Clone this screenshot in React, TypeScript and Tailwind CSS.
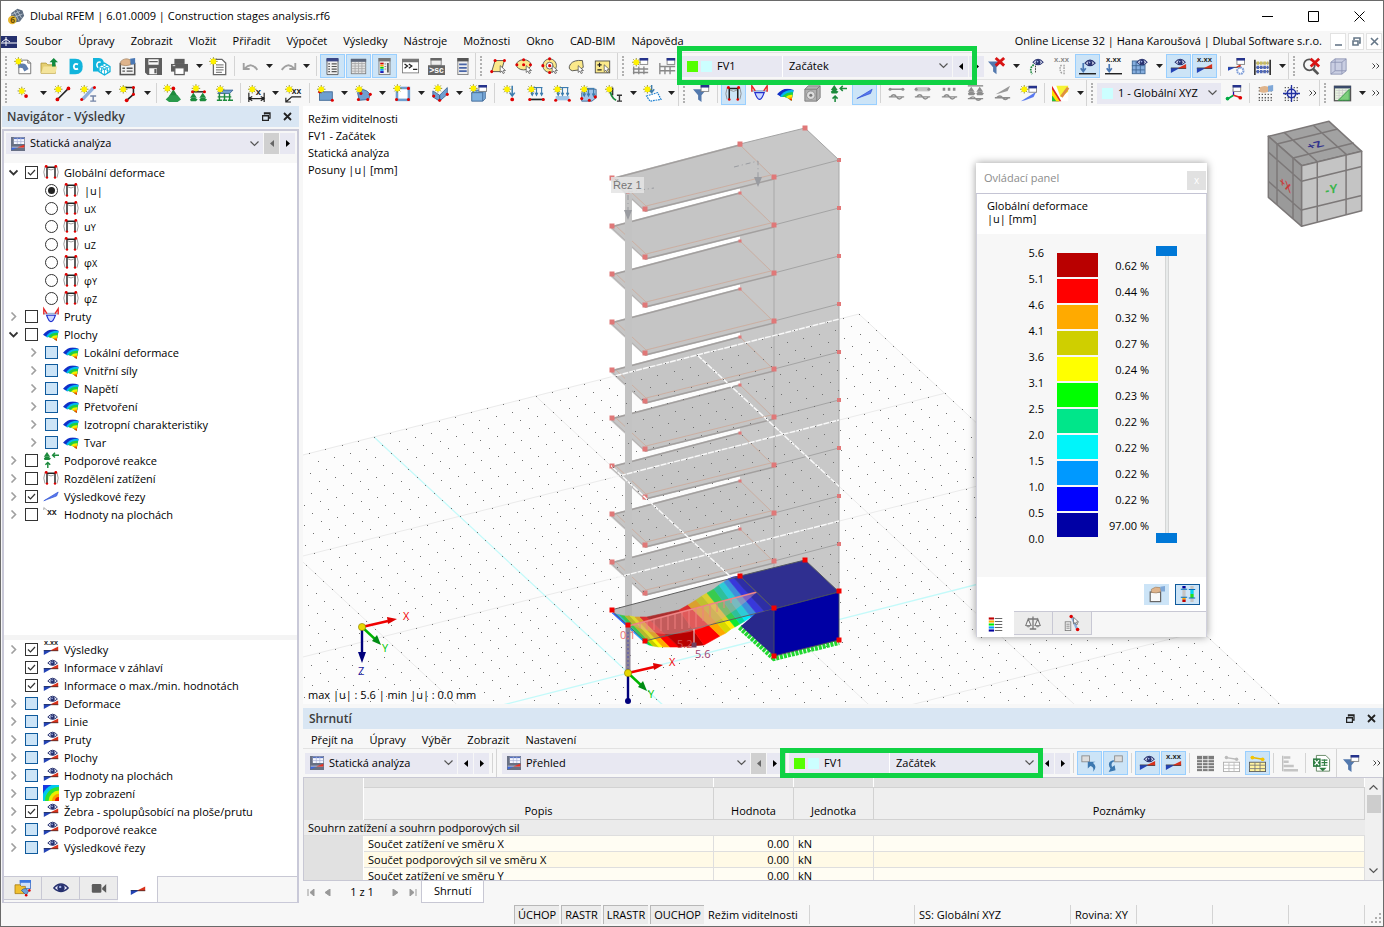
import React from "react";

type P = { x: number; y: number };

/* ---------- small drawing parts ---------- */
const Ico = ({ children, s = 20 }: { children: React.ReactNode; s?: number }) => (
  <svg width={s} height={s} viewBox="0 0 20 20" fill="none" aria-hidden="true" className="shrink-0 overflow-visible">
    {children}
  </svg>
);
const Star = ({ x = 5, y = 5 }: Partial<P>) => (
  <g transform={`translate(${x} ${y})`}>
    <path d="M0-5V5M-5 0H5M-3.5-3.5L3.5 3.5M3.5-3.5L-3.5 3.5" stroke="#8a8420" strokeWidth="1" />
    <circle r="3.3" fill="#fff200" />
  </g>
);
const Dot = ({ x, y, r = 1.8 }: P & { r?: number }) => <circle cx={x} cy={y} r={r} fill="#e00000" />;
const Win = ({ x = 10, y = 0 }: Partial<P>) => (
  <g transform={`translate(${x} ${y})`}>
    <rect x=".5" y=".5" width="9" height="7" fill="#fff" stroke="#7c7c7c" />
    <rect width="10" height="3" fill="#26338c" />
  </g>
);
const Eye = ({ x = 12, y = 5 }: Partial<P>) => (
  <g transform={`translate(${x} ${y})`}>
    <path d="M-6 0Q0-7 6 0Q0 6 -6 0Z" fill="#dfe3f4" stroke="#26306e" strokeWidth="1.2" />
    <circle r="2.8" fill="#26306e" />
    <circle cx="-.6" cy="-.8" r="1" fill="#9fb0e8" />
  </g>
);
const Wedge = () => (
  <>
    <path d="M1 12H19" stroke="#222" strokeWidth="1.4" />
    <path d="M1 12H11L1 17.5Z" fill="#2343b5" />
    <path d="M9 12L19 7V12Z" fill="#d8321c" />
  </>
);
const XXX = ({ y = 5, s = "x.xx", c = "#222" }: { y?: number; s?: string; c?: string }) => (
  <text x="10" y={y} textAnchor="middle" fontSize="9" fontWeight="700" fill={c} fontFamily="Liberation Sans, sans-serif">
    {s}
  </text>
);
const Curs = ({ x = 11, y = 10 }: Partial<P>) => (
  <path transform={`translate(${x} ${y})`} d="M0 0V8L2 6.3L3.4 9.3L5 8.5L3.6 5.7H6.2Z" fill="#fff" stroke="#444" strokeWidth=".8" />
);
const Loads = ({ y = 4 }: { y?: number }) => (
  <g stroke="#3c7cae" strokeWidth="1.3">
    <path d={`M4 ${y}H17`} />
    <path d={`M5 ${y}V${y + 9}M10 ${y}V${y + 9}M16 ${y}V${y + 9}`} />
    <path d={`M3.5 ${y + 6}l1.5 3l1.5-3M8.5 ${y + 6}l1.5 3l1.5-3M14.5 ${y + 6}l1.5 3l1.5-3`} />
  </g>
);
const Frame = ({ c = "#222" }: { c?: string }) => (
  <>
    <path d="M5 17V4H15V17" stroke={c} strokeWidth="1.8" />
    <path d="M2.500 3.500Q-.5 10 2.500 17M17.500 3.500Q20.500 10 17.500 17M6 6Q10 9 14 6" stroke="#888" strokeWidth="1" />
    <Dot x={4} y={3} /><Dot x={16} y={3} /><Dot x={5} y={17} r={1.5} /><Dot x={15} y={17} r={1.5} />
  </>
);
const Fan = () => (
  <>
    <clipPath id="fanShape"><path d="M0 11Q8 1 19.500 6L17 18.500Q11 13 5 14Z" /></clipPath>
    <g clipPath="url(#fanShape)">
      <rect width="20" height="20" fill="#1030c8" />
      <circle cx="17" cy="22" r="16" fill="#00b8f0" />
      <circle cx="17" cy="22" r="13.500" fill="#20d040" />
      <circle cx="17" cy="22" r="10.500" fill="#f4f000" />
      <circle cx="17" cy="22" r="7.500" fill="#ff8c00" />
      <circle cx="17" cy="22" r="5.500" fill="#e01000" />
    </g>
  </>
);
const Member = () => (
  <>
    <path d="M1 7H19" stroke="#9fb6d6" strokeWidth="2" />
    <path d="M1 8V1L5 7M15 7L19 1V8" stroke="#e82828" strokeWidth="1.700" />
    <path d="M4.500 9Q10 25 15.500 9Z" fill="#ccd8ff" stroke="#2030d0" strokeWidth="1.400" />
  </>
);
const Support = ({ x = 0, y = 0, c = "#1c8a3c" }: Partial<P> & { c?: string }) => (
  <g transform={`translate(${x} ${y})`}>
    <path d="M4 0L8 6H0Z" fill={c} />
    <path d="M0 8L2 6H6L9 8L7 10H1Z" fill={c} />
  </g>
);
const Funnel = ({ x = 0, y = 5 }: Partial<P>) => (
  <path transform={`translate(${x} ${y})`} d="M0 0H16L10 7V15L6 12V7Z" fill="#5379ae" />
);
const Dlg = ({ c = "#7c7c7c" }: { c?: string }) => (
  <>
    <rect x="1.500" y="1.500" width="17" height="17" fill="#e4e4e4" stroke={c} />
    <rect x="1" y="1" width="18" height="3.500" fill="#5a6478" />
  </>
);
const Grid = ({ c = "#999" }: { c?: string }) => (
  <path d="M2 6.500H18M2 9.500H18M2 12.500H18M2 15.500H18M6 5V18M10 5V18M14 5V18" stroke={c} />
);
const MiniGrid = () => <path d="M2 3H19M2 7H19M2 11H19M2 15H19M2 18H19" stroke="#555" strokeWidth="1.500" strokeDasharray="1.500 2" />;

/* ---------- icons ---------- */
const I: Record<string, React.ReactNode> = {
  newModel: <><path d="M4.500 2.500H15L18.500 6V18.500H4.500Z" fill="#fff" stroke="#666" /><path d="M15 2.500V6H18.500" stroke="#666" /><path d="M4 8Q9 5 13 8L16 13L11 16L9 12Q6 11 4 12Z" fill="#5f7fae" /><Star x={4} y={4} /></>,
  open: <><path d="M0 6H6L8 8H17V18H0Z" fill="#e5cf72" stroke="#b39b3e" /><path d="M0 18L3 10H19L17 18Z" fill="#f4e49b" /><path d="M15 0L20 5H17V10H13V5H10Z" fill="#128a3e" /></>,
  dC: <><path d="M3 1H10Q18.500 1 18.500 10T10 19H3Z" fill="#12b4dc" /><path d="M13 7.500Q8.500 5.500 8 10Q8.500 14.500 13 12.500" stroke="#fff" strokeWidth="2.200" /></>,
  dBox: <><path d="M0 0H7Q13 0 13 8V16H0Z" fill="#12b4dc" /><path d="M9 5Q5 4 4.500 8Q5 12 8 11" stroke="#fff" strokeWidth="1.800" /><path d="M7 10L13.500 6L20 10V16L13.500 20L7 16Z" fill="#fff" stroke="#12b4dc" strokeWidth="1.500" /><path d="M7 10L13.500 13L20 10M10 8L17 12V18M17 8L10 12V18M13.500 13V20M7 16L13.500 13L20 16" stroke="#12b4dc" /></>,
  hand: <><rect x="1.500" y="6.500" width="17" height="13" fill="#f2f2f2" stroke="#555" strokeWidth="1.800" /><path d="M4 12H7M9 12H16M4 15.500H7M9 15.500H16" stroke="#555" strokeWidth="1.600" /><path d="M2 4Q7 -1 13 2L14 8Q8 10 2 8Z" fill="#dfb48c" stroke="#8a6a4a" strokeWidth=".6" /><path d="M13 1L19 0V7L14 8Z" fill="#4a78b4" /></>,
  save: <path fillRule="evenodd" d="M0 0H20V20H3L0 17ZM4 1.500V8H16V1.500ZM5 3.500H15V5H5ZM5 12V19H14V12ZM11 13H13.500V18H11Z" fill="#5e5e5e" />,
  print: <><rect x="4" y="1" width="12" height="6" fill="#5e5e5e" /><path d="M0 7H20V16H0Z" fill="#5e5e5e" /><rect x="4.500" y="11.500" width="11" height="8" fill="#fff" stroke="#5e5e5e" strokeWidth="1.500" /><path d="M2 9H5" stroke="#fff" /></>,
  report: <><path d="M4 1.500H14L18.500 6V19.500H4Z" fill="#fff" stroke="#666" strokeWidth="1.500" /><path d="M7 8H16M7 11H16M7 14H16M7 17H14" stroke="#888" strokeWidth="1.400" /><Star x={4} y={4} /></>,
  undo: <path d="M2 6V13H9M3 12.500Q11 4 18 14" stroke="#a0a0a0" strokeWidth="2.200" />,
  redo: <path d="M18 6V13H11M17 12.500Q9 4 2 14" stroke="#a0a0a0" strokeWidth="2.200" />,
  panelL: <><path d="M3.500 1H16.500V19.500H3.500Z" fill="#f0f0f0" stroke="#555" /><rect x="3" y="0" width="14" height="4" fill="#3a4686" /><path d="M5 7H7M9 7H15M5 10H7M9 10H15M5 13H7M9 13H15M5 16H7M9 16H15" stroke="#555" strokeWidth="1.400" /></>,
  panelT: <><Dlg /><Grid c="#aaa" /></>,
  panelC: <><rect x="3.500" y=".5" width="13" height="19" fill="#f0f0f0" stroke="#777" /><rect x="3" y="0" width="14" height="4" fill="#777" /><path d="M5 6.500H9" stroke="#c00" strokeWidth="2" /><path d="M5 9H9" stroke="#fa0" strokeWidth="2" /><path d="M5 11.500H9" stroke="#0c0" strokeWidth="2" /><path d="M5 14H9" stroke="#09f" strokeWidth="2" /><path d="M5 16.500H9" stroke="#00a" strokeWidth="2" /><path d="M10 7H12M10 10H12M10 13H12" stroke="#777" /><path d="M14 6V17" stroke="#555" strokeWidth="2" /></>,
  console: <><rect x=".5" y="1.500" width="19" height="16" fill="#fff" stroke="#777" /><rect y="1" width="20" height="4" fill="#777" /><path d="M3 7L6.500 9.500L3 12M8 7L11.500 9.500L8 12M13 13.500H18" stroke="#222" strokeWidth="1.500" /></>,
  script: <><rect x="3.500" y=".5" width="12" height="8" fill="#eee" stroke="#777" /><rect x="3" y="0" width="13" height="3" fill="#666" /><rect x="0" y="8.500" width="20" height="11.500" fill="#666" /><text x="10" y="17.500" textAnchor="middle" fontSize="10" fontWeight="700" fill="#fff" fontFamily="Liberation Sans, sans-serif">&gt;sc</text></>,
  doc: <><rect x="4.500" y=".5" width="12" height="19" fill="#eee" stroke="#777" /><rect x="4" y="0" width="13" height="4" fill="#555" /><path d="M6 7.500H15M6 11.500H15M6 15.500H15" stroke="#4a66a8" strokeWidth="2" /></>,
  selRect: <><path d="M6 3H17L13 16H2Z" fill="#fbe98a" stroke="#444" /><Dot x={6} y={3} /><Dot x={17} y={3} /><Dot x={2} y={16} /><Curs x={12} y={9} /></>,
  selEll: <><ellipse cx="9" cy="8" rx="8.500" ry="6" fill="#fbe98a" stroke="#444" /><Dot x={9} y={2} /><Dot x={1} y={8} /><Dot x={17} y={8} /><Dot x={9} y={8} /><Curs x={12} y={9} /></>,
  selRing: <><circle cx="9" cy="9" r="8" fill="#fbe98a" stroke="#555" /><circle cx="9" cy="9" r="4" fill="#fff" stroke="#555" /><Dot x={9} y={1} /><Dot x={9} y={17} /><Dot x={1} y={9} /><Dot x={9} y={9} /><Curs x={12} y={9} /></>,
  selLasso: <><path d="M3 7Q7 2 17 3L18 11L13 14L5 15Q-1 13 3 7Z" fill="#fbe98a" stroke="#444" /><Curs x={12} y={9} /></>,
  selPM: <><rect x="1.500" y="3.500" width="17" height="14" fill="#fbe98a" stroke="#444" /><path d="M4 8H9M6.500 5.500V10.500M4 14H9" stroke="#222" strokeWidth="1.400" /><Curs x={12} y={8} /></>,
  tblStar: <><path d="M2 10V19M8 10V19M14 10V19M1 13H19M1 17H19" stroke="#888" strokeWidth="1.600" /><Win x={9} y={0} /><Star /></>,
  tbl: <><path d="M1 6V19M7 10V19M13 10V19M1 10H19M1 15H19" stroke="#888" strokeWidth="1.600" /><Win x={9} y={0} /></>,
  filtX: <><Funnel y={4} /><path d="M9 0L19 9M19 0L9 9" stroke="#d81414" strokeWidth="3.400" /></>,
  eyeBeam: <><path d="M8 8Q2 12 6 19" stroke="#1c8a3c" strokeWidth="2" strokeDasharray="2 1" /><path d="M10 9V18" stroke="#222" strokeDasharray="2 1" /><Eye x={13} y={5} /></>,
  xxBeam: <><XXX c="#888" s="x.xx" /><path d="M10 8Q6 13 11 19M13 8V19" stroke="#999" strokeWidth="1.500" strokeDasharray="2 1" /></>,
  eyeLoad: <><path d="M0 18.500H20" stroke="#222" strokeWidth="1.700" /><path d="M5 6V16M2 12L5 16L8 12" stroke="#4a78b4" strokeWidth="2" /><Eye x={13} y={6} /></>,
  xxLoad: <><XXX /><path d="M0 18.500H20" stroke="#222" strokeWidth="1.700" /><path d="M5 7V16M2 12L5 16L8 12" stroke="#4a78b4" strokeWidth="2" /></>,
  gridEye: <><rect x="1.500" y="3.500" width="15" height="15" fill="#86aede" stroke="#3c6492" /><path d="M6 4V18M11 4V18M1 9H16M1 14H16" stroke="#3c6492" /><Eye x={13} y={5} /></>,
  resEye: <><Wedge /><Eye x={12} y={5} /></>,
  resXX: <><Wedge /><XXX /></>,
  resGear: <><path d="M0 11H16" stroke="#222" /><path d="M0 11H9L0 15Z" fill="#2343b5" /><path d="M9 11L15 7V11Z" fill="#d8321c" /><Win x={10} y={0} /><circle cx="14.500" cy="15" r="3.700" stroke="#7f9ed8" strokeWidth="2.400" fill="#fff" strokeDasharray="2 .8" /></>,
  abacus: <><path d="M1 2V20M19 2V20" stroke="#222" strokeWidth="1.800" /><path d="M2 6H18M2 11H18M2 16H18" stroke="#555" /><path d="M3 6H17" stroke="#c8bc60" strokeWidth="4" strokeDasharray="3 1" /><path d="M3 11H17M3 16H17" stroke="#5068b8" strokeWidth="4" strokeDasharray="3 1" /></>,
  magX: <><circle cx="7.500" cy="8" r="6.500" stroke="#555" strokeWidth="2" /><path d="M12 13L18 19" stroke="#555" strokeWidth="3.200" /><path d="M9 1L19 10M19 1L9 10" stroke="#d81414" strokeWidth="3.200" /></>,
  box: <><path d="M1 5L6 1H19V15L14 19H1Z" fill="#c9cee2" stroke="#8d93b4" /><path d="M1 5H14V19M14 5L19 1M6 1V15H19M6 15L1 19" stroke="#8d93b4" /></>,
  node: <><Star x={8} y={7} /><Dot x={13} y={13} r={2.2} /></>,
  line: <><path d="M4 17L17 4" stroke="#222" strokeWidth="1.800" /><Dot x={4} y={17} r={2.2} /><Dot x={17} y={4} r={2.2} /><Star /></>,
  member: <><path d="M3 17L16 3" stroke="#8fb0dc" strokeWidth="4" /><path d="M12 13H19M15.500 13V19M12 19H19" stroke="#7485a8" strokeWidth="1.700" /><Dot x={17} y={3} /><Dot x={2} y={17} /><Star /></>,
  poly: <><path d="M4 3H17V11L9 18" stroke="#222" strokeWidth="1.800" /><Dot x={17} y={3} /><Dot x={17} y={11} /><Dot x={9} y={18} r={2.2} /><Star /></>,
  sup1: <><path d="M11 5L16 13H6Z" fill="#1c8a3c" /><path d="M2 17L7 12H16L20 17L16 20H6Z" fill="#2a9a4c" /><Dot x={11} y={4} r={2.2} /><Star x={4} y={4} /></>,
  sup2: <><path d="M3 8H18" stroke="#222" strokeWidth="1.700" /><Support x={0} y={9} /><Support x={11} y={9} /><Dot x={3} y={8} /><Dot x={17} y={8} /><Star x={7} y={4} /></>,
  sup3: <><path d="M2 10L6 6H20L16 10Z" fill="#6f9fd0" stroke="#3c6492" /><path d="M4 10V17M10 10V17M16 10V17M1 18H7M8 18H13M14 18H20M2 14H18" stroke="#1c8a3c" strokeWidth="1.700" /><Star /></>,
  dimX: <><path d="M1 9V20M19 9V20M1 16H19M5 13.500L1 16L5 18.500M15 13.500L19 16L15 18.500" stroke="#222" strokeWidth="1.400" /><text x="9" y="12" fontSize="11" fontWeight="700" fill="#222" fontFamily="Liberation Sans, sans-serif">x</text><Star /></>,
  dimXX: <><path d="M19 14H8L1 20M1 15V20H7" stroke="#222" strokeWidth="1.400" /><text x="8" y="11" fontSize="10" fontWeight="700" fill="#222" fontFamily="Liberation Sans, sans-serif">xx</text><Star /></>,
  surf: <><rect x="3" y="8" width="15" height="10" fill="#6f9fd0" stroke="#3c6492" /><Dot x={3} y={8} /><Dot x={18} y={18} /><Star /></>,
  surf2: <><path d="M3 9Q10 1 18 11L16 17L5 18Z" fill="#6f9fd0" stroke="#3c6492" /><Dot x={7} y={10} /><Dot x={18} y={11} /><Dot x={4} y={17} /><Dot x={15} y={17} /><Star /></>,
  opening: <><rect x="3.500" y="3.500" width="14" height="14" fill="#fff" stroke="#6f9fd0" strokeWidth="3" /><Dot x={5} y={5} /><Dot x={17} y={4} /><Dot x={3} y={17} /><Dot x={17} y={17} /><Star x={4} y={4} /></>,
  solid: <><path d="M1 7L9 12V19L1 14Z M9 12L18 3V11L9 19Z" fill="#6f9fd0" stroke="#3c6492" /><Dot x={9} y={18} /><Dot x={18} y={11} /><Dot x={2} y={13} /><Star x={7} y={4} /></>,
  solidWin: <><path d="M2 9L5 6H18V16L15 19H2Z" fill="#7fb0de" stroke="#3c6492" /><path d="M2 9H15V19M15 9L18 6" stroke="#3c6492" /><Win x={10} y={0} /><Star x={4} y={4} /></>,
  load1: <><path d="M12 1V13M9 9L12 13L15 9" stroke="#3c7cae" strokeWidth="1.800" /><Dot x={12} y={17} r={2.2} /><Star x={6} y={5} /></>,
  load2: <><Loads y={3} /><path d="M2 17H19" stroke="#222" strokeWidth="2" /><Dot x={2} y={17} /><Dot x={18} y={17} /><Star x={4} /></>,
  load3: <><rect x="2" y="13" width="16" height="5" fill="#9fc4e8" /><Loads y={3} /><Dot x={2} y={18} /><Dot x={18} y={18} /><Star x={4} /></>,
  load4: <><path d="M2 9L6 5H19V15L14 19H2Z" fill="#9fc4e8" stroke="#3c6492" /><Loads /><Dot x={2} y={16} /><Dot x={11} y={18} /><Dot x={18} y={14} /><Star /></>,
  loadI: <><path d="M6 4Q6 14 13 18" stroke="#1c8a3c" strokeWidth="2" /><path d="M9 3V12M14 12H20M17 12V19M14 19H20" stroke="#333" strokeWidth="1.600" /><Star /></>,
  loadS: <><path d="M9 0V8M6 5L9 9L12 5" stroke="#3c7cae" strokeWidth="1.700" /><path d="M3 13L16 9L20 17L7 19Z" fill="#fff" stroke="#1c7fd0" strokeDasharray="2 1" strokeWidth="1.400" /><Star x={4} y={5} /></>,
  filtWin: <><Funnel y={5} /><Win x={9} y={0} /></>,
  frame: <Frame />,
  member2: <Member />,
  fan: <Fan />,
  cube: <><path d="M1 5L5 1H19V15L15 19H1Z" fill="#b0b0b0" stroke="#777" /><path d="M1 5H15V19M15 5L19 1" stroke="#777" /><circle cx="8" cy="12" r="5" fill="#ddd" stroke="#888" /><circle cx="8" cy="12" r="1.800" fill="#777" /></>,
  reac: <><Support x={1} y={0} /><path d="M12 4H20M15 1L12 4L15 7M6 20V13M3 16L6 13L9 16" stroke="#1c8a3c" strokeWidth="1.800" /></>,
  slice: <path d="M1 16L19 5L17 10L6 14Z" fill="#5878f0" stroke="#2c50d0" strokeWidth=".8" />,
  d1: <><path d="M2 5H18M1 14H19M3 14Q7 9 10 14T17 14" stroke="#8c8c8c" strokeWidth="1.600" /><circle cx="2.500" cy="5" r="1.800" fill="#8c8c8c" /><circle cx="17.500" cy="5" r="1.800" fill="#8c8c8c" /></>,
  d2: <><path d="M2 5H18" stroke="#c6c6c6" strokeWidth="5" /><path d="M1 14H19M3 14Q7 9 10 14T17 14" stroke="#8c8c8c" strokeWidth="1.600" /><circle cx="2.500" cy="5" r="1.800" fill="#8c8c8c" /><circle cx="17.500" cy="5" r="1.800" fill="#8c8c8c" /></>,
  d3: <><path d="M2 5H18" stroke="#8c8c8c" strokeWidth="3.500" strokeDasharray="3 3" /><path d="M1 14H19M3 14Q7 9 10 14T17 14" stroke="#8c8c8c" strokeWidth="1.600" /></>,
  d4: <><path d="M1 1H19" stroke="#8c8c8c" strokeWidth="1.600" /><Support x={1} y={2} c="#8c8c8c" /><Support x={11} y={2} c="#8c8c8c" /><path d="M1 16H19M3 16Q7 12 10 16T17 16" stroke="#8c8c8c" strokeWidth="1.600" /></>,
  d5: <><path d="M2 11L19 1L16 7L6 10Z" fill="#999" /><path d="M1 15H19M3 15Q7 11 10 15T17 15" stroke="#8c8c8c" strokeWidth="1.600" /></>,
  sliceStar: <><path d="M1 19L19 8L16 14L6 18Z" fill="#5878f0" /><Win x={10} y={1} /><Star /></>,
  paint: <><path d="M0 1H19V19H0Z" fill="#fff" /><path d="M0 1L11 19H0Z" fill="#e02020" /><path d="M0 7L8 19H0Z" fill="#20c040" /><path d="M0 5L9 19H5L0 12Z" fill="#ffe000" /><path d="M5 1H19V8L10 14Z" fill="#f4f000" opacity=".8" /><path d="M19 3L11 14" stroke="#e09040" strokeWidth="3.400" /></>,
  axes: <><path d="M10 12V5" stroke="#20a" strokeWidth="1.500" /><path d="M10 12L2 17" stroke="#0a4" strokeWidth="2" /><path d="M10 12L19 15" stroke="#e02020" strokeWidth="2" /><Dot x={18} y={15} r={2.200} /><circle cx="3" cy="16" r="2.200" fill="#0a4" /><Win x={9} y={0} /></>,
  handGrid: <><MiniGrid /><path d="M3 3Q8 0 13 2L13 8Q8 10 3 8Z" fill="#dfb48c" /><path d="M13 1L19 0V7L13 8Z" fill="#7fa8d8" /></>,
  target: <><MiniGrid /><circle cx="10" cy="10" r="5" stroke="#2030a0" strokeWidth="1.800" fill="#eef" /><path d="M10 0V20M0 10H20" stroke="#2030a0" strokeWidth="1.500" /></>,
  tblGreen: <><rect x=".5" y="1.500" width="19" height="17" fill="#e8f4e0" stroke="#555" strokeWidth="1.500" /><Grid c="#ccc" /><rect y="1" width="20" height="3" fill="#3a4a6a" /><path d="M18 5V18H5Z" fill="#7ccf7c" stroke="#2c8a3c" /></>,
  analysis: <><rect width="20" height="20" fill="#687084" /><rect x="4" y="1" width="15" height="9" fill="#f4f6ff" /><path d="M4 2H19" stroke="#5470c0" strokeWidth="2" /><path d="M4 6.500H19M9 1V10M14 1V10" stroke="#aab4d8" /><path d="M1 15H10L1 19Z" fill="#3c68e0" /><path d="M1 14.500H19" stroke="#dde" /><path d="M9 15L19 11V15Z" fill="#f03020" /></>,
  xxS: <><text x="11" y="11" textAnchor="middle" fontSize="11" fontWeight="700" fill="#222" fontFamily="Liberation Sans, sans-serif">xx</text><path d="M1 2L6 6M1 2V5" stroke="#999" /></>,
  iso: <><clipPath id="isoBox"><rect width="20" height="20" /></clipPath><g clipPath="url(#isoBox)"><rect width="20" height="20" fill="#1838e0" /><circle cx="20" cy="20" r="22" fill="#00c8f0" /><circle cx="20" cy="20" r="17.500" fill="#30e030" /><circle cx="20" cy="20" r="13" fill="#e8f000" /><circle cx="20" cy="20" r="9" fill="#ff9c00" /><circle cx="20" cy="20" r="5" fill="#e81800" /></g></>,
  navData: <><rect x="6.500" y=".5" width="13" height="10" fill="#cfe0f8" stroke="#3c6cc0" /><rect x="6" y="0" width="14" height="3.500" fill="#3c78e0" /><path d="M0 6H6L8 8H13V17H0Z" fill="#f0c030" stroke="#a87c10" /><path d="M8 13Q13 8 17 14L14 19Z" fill="#6fa0d8" stroke="#3c6492" /><Dot x={18} y={13} r={1.600} /><Dot x={14} y={19} r={1.600} /></>,
  navEye: <><path d="M1 10Q10 0 19 10Q10 19 1 10Z" fill="#eef" stroke="#26306e" strokeWidth="1.600" /><circle cx="10" cy="10" r="4.600" fill="#26306e" /><circle cx="9" cy="8.600" r="1.500" fill="#9fb0e8" /></>,
  cam: <><rect x="1" y="5" width="12" height="11" rx="1.500" fill="#5c5c5c" /><path d="M14 10L19 5V16L14 12Z" fill="#5c5c5c" /></>,
  wedge: <Wedge />,
  syncA: <><rect x="1" y="1" width="9" height="7" fill="#ddd" stroke="#888" /><path d="M8 8H17M8 8V16L11 13Q16 14 14 20Q20 14 14 9L17 8Z" fill="#3c78b0" /></>,
  syncB: <><rect x="9" y="1" width="9" height="7" fill="#ddd" stroke="#888" /><path d="M8 6Q-1 8 4 16L2 20L10 18L9 12L6 14Q4 9 8 8Z" fill="#3c78b0" /></>,
  tGrid: <><rect x="0" y="1" width="20" height="18" fill="#7c7c7c" /><path d="M0 5.500H20M0 9H20M0 12.500H20M0 16H20M6.500 1V19M13 1V19" stroke="#f4f4f4" /></>,
  tNode: <><path d="M4 3L16 5" stroke="#bbb" strokeWidth="1.500" /><circle cx="4" cy="3" r="2" fill="#bbb" /><circle cx="16" cy="5" r="2" fill="#bbb" /><rect x=".5" y="8.500" width="19" height="11" fill="#fff" stroke="#aaa" /><path d="M0 12H20M0 16H20M7 9V19M13 9V19" stroke="#bbb" /></>,
  tNodeY: <><path d="M4 3L16 5" stroke="#e8b800" strokeWidth="1.700" /><circle cx="4" cy="3" r="2.200" fill="#f4c400" /><circle cx="16" cy="5" r="2.200" fill="#f4c400" /><rect x=".5" y="8.500" width="19" height="11" fill="#fff3a0" stroke="#555" /><path d="M0 12H20M0 16H20M7 9V19M13 9V19" stroke="#777" /></>,
  bars: <><path d="M2 1V19" stroke="#bbb" strokeWidth="1.500" /><path d="M3 3H11M3 8H9M3 13H15M3 18H20" stroke="#c4c4c4" strokeWidth="3" /></>,
  excel: <><path d="M4 .5H15L19.500 5V19H4Z" fill="#fff" stroke="#557a55" /><rect x="0" y="4" width="9" height="10" fill="#2f7d43" /><path d="M2 6L7 12M7 6L2 12" stroke="#fff" strokeWidth="1.500" /><path d="M10 6H17M10 9H17M10 12H17M13.500 5V13" stroke="#2f7d43" strokeWidth="1.300" /><path d="M7 15H16L11.500 19Z" fill="#2f7d43" /></>,
  legend: <><path d="M1 2H8" stroke="#c00000" strokeWidth="2.800" /><path d="M1 6H8" stroke="#fa0" strokeWidth="2.800" /><path d="M1 10H8" stroke="#0e0" strokeWidth="2.800" /><path d="M1 14H8" stroke="#09f" strokeWidth="2.800" /><path d="M1 18H8" stroke="#0000a0" strokeWidth="2.800" /><path d="M9 2H19M9 6H19M9 10H19M9 14H19M9 18H19" stroke="#555" strokeWidth="1.200" /></>,
  scales: <><path d="M10 2V17M6 17.500H14M4 5H16" stroke="#777" strokeWidth="1.600" /><path d="M4 5L1 13H7.500ZM16 5L12.500 13H19Z" fill="#f4f4f4" stroke="#777" strokeWidth="1.300" /><path d="M1 13Q4 18 7.500 13ZM12.500 13Q16 18 19 13Z" fill="#999" /></>,
  filtMem: <><rect x="1.500" y="8.500" width="7" height="11" fill="#eee" stroke="#777" /><path d="M3 11.500H7M3 14H7M3 16.500H7" stroke="#777" /><path d="M10 3L16 17" stroke="#8fb0dc" strokeWidth="3" /><Dot x={9} y={2} r={2.200} /><Dot x={17} y={18} r={2.200} /><Curs x={12} y={3} /></>,
  handBox: <><rect x="1.500" y="7.500" width="13" height="12" fill="#f8f8f8" stroke="#666" strokeWidth="1.500" /><path d="M3 4Q8 0 14 2L15 7Q9 10 3 8Z" fill="#dfb48c" stroke="#8a6a4a" strokeWidth=".6" /><path d="M14 1L20 0V7L15 7Z" fill="#7fa8d8" /></>,
  ranges: <><rect x="3" y="0" width="4" height="20" fill="#c4c4c4" /><rect x="3" y="0" width="4" height="3" fill="#0000a0" /><rect x="3" y="14" width="4" height="3" fill="#fa0" /><rect x="3" y="17" width="4" height="3" fill="#c00000" /><rect x="13" y="0" width="4" height="20" fill="#c4c4c4" /><rect x="13" y="5" width="4" height="5" fill="#00d8f0" /><rect x="13" y="10" width="4" height="5" fill="#20e020" /><path d="M1 4H9M1 14H9M11 4.500H19M11 15H19" stroke="#0070c0" strokeWidth="1.300" /></>,
};

/* ---------- controls ---------- */
const Tool = ({ n, on = false }: { n: string; on?: boolean }) => (
  <button
    type="button"
    aria-label={n}
    aria-pressed={on}
    className={`flex h-6 w-[25px] shrink-0 items-center justify-center ${on ? "border border-[#99cfff] bg-[#cce4f7]" : ""}`}
  >
    <Ico s={17}>{I[n]}</Ico>
  </button>
);
const Drop = () => (
  <button type="button" aria-label="Více" className="flex h-6 w-3 shrink-0 items-center justify-center">
    <svg width="7" height="4" viewBox="0 0 7 4"><path d="M0 0H7L3.500 4Z" fill="#222" /></svg>
  </button>
);
const Sep = () => <span className="mx-[3px] h-5 w-px shrink-0 bg-[#d4d4d4]" />;
const Grip = () => (
  <span className="mx-1 h-5 w-px shrink-0 border-l-2 border-dotted border-[#b0b0b0]" />
);
const More = ({ className = "" }: { className?: string }) => (
  <button type="button" aria-label="Další" className={`flex h-6 w-3 shrink-0 items-center justify-center ${className}`}>
    <svg width="8" height="6" viewBox="0 0 8 6" fill="none"><path d="M.5 .5L3 3L.5 5.500M4.500 .5L7 3L4.500 5.500" stroke="#444" /></svg>
  </button>
);
const Group = ({ t, w }: { t: string; w: string }) => (
  <div className={`flex shrink-0 items-center justify-between ${w}`}>
    {t.split(" ").map((n, i) =>
      n === "v" ? <Drop key={i} /> : <Tool key={i} n={n.replace("*", "")} on={n.endsWith("*")} />
    )}
  </div>
);
const Chevron = ({ className = "" }: { className?: string }) => (
  <svg width="9" height="6" viewBox="0 0 9 6" fill="none" className={`pointer-events-none shrink-0 ${className}`}>
    <path d="M.5 .5L4.500 4.500L8.500 .5" stroke="#555" strokeWidth="1.200" />
  </svg>
);
const Step = ({ dir, dim = false }: { dir: "l" | "r"; dim?: boolean }) => (
  <button
    type="button"
    aria-label={dir === "l" ? "Předchozí" : "Další"}
    className={`flex h-[21px] w-[15px] shrink-0 items-center justify-center ${dim ? "bg-[#d0d0d0]" : "bg-[#e8e8f2]"}`}
  >
    <svg width="4" height="7" viewBox="0 0 4 7">
      <path d={dir === "l" ? "M4 0V7L0 3.500Z" : "M0 0V7L4 3.500Z"} fill={dim ? "#666" : "#000"} />
    </svg>
  </button>
);
const Combo = ({ icon, text, label, w }: { icon?: string; text: string; label: string; w: string }) => (
  <div className={`flex h-[21px] shrink-0 items-center bg-[#e8e8f2] pl-[5px] pr-1 ${w}`}>
    {icon ? <Ico s={14}>{I[icon]}</Ico> : <span className="h-[11px] w-[11px] shrink-0 bg-[#ccffff]" />}
    <select aria-label={label} className="ml-[5px] min-w-0 flex-1 appearance-none bg-transparent outline-none">
      <option>{text}</option>
    </select>
    <Chevron />
  </div>
);
const StageCombo = ({ w, mark }: { w: string; mark: string }) => (
  <div className={`relative flex h-[21px] shrink-0 items-center bg-[#e8e8f2] pl-[5px] pr-1 ${w}`}>
    <span className="h-[11px] w-[11px] bg-[#55ff00]" />
    <span className="ml-[3px] h-[11px] w-[11px] bg-[#ccffff]" />
    <span className="ml-[5px] w-[65px]">FV1</span>
    <span className="h-full w-px bg-white" />
    <select aria-label="Fáze výstavby" className="ml-[6px] min-w-0 flex-1 appearance-none bg-transparent outline-none">
      <option>Začátek</option>
    </select>
    <Chevron />
    <span className={`pointer-events-none absolute z-10 border-[5px] border-[#10d244] ${mark}`} />
  </div>
);
const DockButtons = () => (
  <div className="ml-auto flex items-center gap-3 pr-[7px]">
    <button type="button" aria-label="Uvolnit panel">
      <svg width="9" height="9" viewBox="0 0 9 9" fill="none" stroke="#222"><path d="M2.500 2.500V1H8V6H6.500M2.500 1.500H8" strokeWidth="1.300" /><path d="M.6 3.500H6.400V8.400H.6ZM.6 4H6.400" strokeWidth="1.200" /></svg>
    </button>
    <button type="button" aria-label="Zavřít panel">
      <svg width="9" height="9" viewBox="0 0 9 9"><path d="M1 1L8 8M8 1L1 8" stroke="#222" strokeWidth="1.800" /></svg>
    </button>
  </div>
);

/* ---------- navigator ---------- */
type Row = { t: string; sub?: string; icon: string; arrow?: "open" | "closed"; kind: "on" | "off" | "blue" | "ron" | "roff"; d?: boolean };
const tree: Row[] = [
  { t: "Globální deformace", icon: "frame", arrow: "open", kind: "on" },
  { t: "|u|", icon: "frame", kind: "ron", d: true },
  { t: "u", sub: "X", icon: "frame", kind: "roff", d: true },
  { t: "u", sub: "Y", icon: "frame", kind: "roff", d: true },
  { t: "u", sub: "Z", icon: "frame", kind: "roff", d: true },
  { t: "φ", sub: "X", icon: "frame", kind: "roff", d: true },
  { t: "φ", sub: "Y", icon: "frame", kind: "roff", d: true },
  { t: "φ", sub: "Z", icon: "frame", kind: "roff", d: true },
  { t: "Pruty", icon: "member2", arrow: "closed", kind: "off" },
  { t: "Plochy", icon: "fan", arrow: "open", kind: "off" },
  { t: "Lokální deformace", icon: "fan", arrow: "closed", kind: "blue", d: true },
  { t: "Vnitřní síly", icon: "fan", arrow: "closed", kind: "blue", d: true },
  { t: "Napětí", icon: "fan", arrow: "closed", kind: "blue", d: true },
  { t: "Přetvoření", icon: "fan", arrow: "closed", kind: "blue", d: true },
  { t: "Izotropní charakteristiky", icon: "fan", arrow: "closed", kind: "blue", d: true },
  { t: "Tvar", icon: "fan", arrow: "closed", kind: "blue", d: true },
  { t: "Podporové reakce", icon: "reac", arrow: "closed", kind: "off" },
  { t: "Rozdělení zatížení", icon: "frame", arrow: "closed", kind: "off" },
  { t: "Výsledkové řezy", icon: "slice", arrow: "closed", kind: "on" },
  { t: "Hodnoty na plochách", icon: "xxS", arrow: "closed", kind: "off" },
];
const display: Row[] = [
  { t: "Výsledky", icon: "resXX", arrow: "closed", kind: "on" },
  { t: "Informace v záhlaví", icon: "resEye", kind: "on" },
  { t: "Informace o max./min. hodnotách", icon: "resEye", kind: "on" },
  { t: "Deformace", icon: "resEye", arrow: "closed", kind: "blue" },
  { t: "Linie", icon: "resEye", arrow: "closed", kind: "blue" },
  { t: "Pruty", icon: "resEye", arrow: "closed", kind: "blue" },
  { t: "Plochy", icon: "resEye", arrow: "closed", kind: "blue" },
  { t: "Hodnoty na plochách", icon: "resEye", arrow: "closed", kind: "blue" },
  { t: "Typ zobrazení", icon: "iso", arrow: "closed", kind: "blue" },
  { t: "Žebra - spolupůsobící na ploše/prutu", icon: "resEye", arrow: "closed", kind: "on" },
  { t: "Podporové reakce", icon: "resEye", arrow: "closed", kind: "blue" },
  { t: "Výsledkové řezy", icon: "resEye", arrow: "closed", kind: "blue" },
];
const TreeRow = ({ r }: { r: Row }) => {
  const radio = r.kind === "ron" || r.kind === "roff";
  return (
    <li className={`flex h-[18px] items-center ${r.d ? "pl-5" : ""}`}>
      <span className="flex w-[18px] justify-center">
        {r.arrow && (
          <button type="button" aria-label="Rozbalit">
            <svg width="9" height="9" viewBox="0 0 9 9" fill="none">
              {r.arrow === "open" ? <path d="M.5 2.500L4.500 6.500L8.500 2.500" stroke="#333" strokeWidth="1.800" /> : <path d="M2.500 .5L6.500 4.500L2.500 8.500" stroke="#a0a0a0" strokeWidth="1.600" />}
            </svg>
          </button>
        )}
      </span>
      <label className="flex items-center">
        <span className="relative ml-[3px] flex h-[13px] w-[13px]">
          {radio ? (
            <input type="radio" name="deformace" defaultChecked={r.kind === "ron"} className="peer h-[13px] w-[13px] appearance-none rounded-full border border-[#333] bg-white" />
          ) : (
            <input type="checkbox" defaultChecked={r.kind === "on"} className={`peer h-[13px] w-[13px] appearance-none border ${r.kind === "blue" ? "border-[#0f5a9c] bg-[#cce4f7]" : "border-[#333] bg-white"}`} />
          )}
          {radio ? (
            <span className="pointer-events-none absolute inset-[3px] hidden rounded-full bg-[#222] peer-checked:block" />
          ) : (
            <svg viewBox="0 0 13 13" fill="none" className="pointer-events-none absolute inset-0 hidden peer-checked:block"><path d="M3 6.500L5.500 9L10 4" stroke="#333" strokeWidth="1.200" /></svg>
          )}
        </span>
        <span className="ml-[5px] flex"><Ico s={16}>{I[r.icon]}</Ico></span>
        <span className="ml-[5px] whitespace-nowrap pt-[2px] leading-4">
          {r.t}
          {r.sub && <span className="text-[9px]">{r.sub}</span>}
        </span>
      </label>
    </li>
  );
};

/* ---------- scene ---------- */
const FLOORS = [0, 1, 2, 3, 4, 5, 6, 7, 8];
const SIDE = FLOORS.map((i) => i * 48);
const C0 = { x: 859, y: 315 };
const U = { x: 16.17, y: -4.1 };
const V = { x: 8.56, y: 7.93 };
const gridPoint = (i: number, j: number) => ({ x: C0.x - i * U.x + j * V.x, y: C0.y - i * U.y + j * V.y });
let dots = "";
for (let i = 0; i < 70; i++)
  for (let j = 0; j < 50; j++) {
    const p = gridPoint(i, j);
    if (p.x > 303 && p.y < 705) dots += `M${Math.round(p.x)} ${Math.round(p.y) + 0.5}h1`;
  }
let major = "";
for (let k = 0; k < 8; k++) {
  const a = gridPoint(0, k * 10), b = gridPoint(80, k * 10);
  const c = gridPoint(k * 10, 0), d = gridPoint(k * 10, 80);
  if (k !== 3) major += `M${a.x} ${a.y}L${b.x} ${b.y}M${c.x} ${c.y}L${d.x} ${d.y}`;
}
const bands: [number, number, number, number, string][] = [
  [612, 614, 643, 642, "#2460ff"], [616, 615, 645, 644, "#00c8f0"], [620, 616, 649, 646, "#10e030"],
  [625, 617, 653, 647, "#c8cc00"], [630, 617, 659, 648, "#ffff00"], [635, 618, 663, 648, "#ffa800"],
  [640, 618, 670, 648, "#ff0000"], [647, 618, 679, 648, "#b80000"], [679, 611, 704, 646, "#ff0000"],
  [688, 606, 720, 637, "#ffa800"], [696, 601, 726, 634, "#d8d800"], [702, 597, 731, 630, "#fff000"],
  [707, 594, 735, 628, "#10e830"], [714, 590, 740, 625, "#00d8a0"], [719, 586, 745, 622, "#00e8f8"],
  [724, 583, 751, 618, "#1890ff"], [728, 580, 757, 615, "#1010ff"], [733, 578, 765, 613, "#0000b0"],
  [740, 577, 774, 610, ""],
];
const Nd = ({ x, y, c = "#e07878", s = 5 }: P & { c?: string; s?: number }) => (
  <rect x={x - s / 2} y={y - s / 2} width={s} height={s} fill={c} />
);
const Triad = ({ x, y, z }: P & { z: number }) => (
  <g transform={`translate(${x} ${y})`}>
    <path d={`M0 0V${z}`} stroke="#00007c" strokeWidth="2.400" />
    <path d="M0 0L26-6" stroke="#f00000" strokeWidth="2.400" />
    <path d="M25-10L35-8L26-3Z" fill="#e00000" />
    <path d="M0 0L14 13" stroke="#00b400" strokeWidth="2.400" />
    <path d="M15 8L19 18L10 14Z" fill="#008c14" />
    <circle r="3.600" fill="#e8d800" stroke="#8a7c00" strokeWidth=".6" />
    <g fontFamily="Open Sans, sans-serif" fontSize="11"><text x="41" y="-7" fill="#f00000">X</text><text x="20" y="25" fill="#00c800">Y</text></g>
  </g>
);
const Scene = () => (
  <svg className="absolute inset-0 h-full w-full" aria-label="Model konstrukce" role="img">
    <defs>
      <clipPath id="bld"><path d="M611 179L805 129L839 161V593L805 561L740 577L611 611Z" /></clipPath>
    </defs>
    <g transform="translate(-303 -107)" fill="none">
      <path d="M303 456L859 315L1290 714H303Z" fill="#fcfcfc" />
      <path d={major} stroke="#ebebeb" />
      <path d="M374 438L665 708M420 727L1010 577" stroke="#c4fafa" strokeWidth="1.300" />
      {/* core */}
      <path d="M740 145L805 129L839 161V593L774 610L740 577Z" fill="#c8c8c8" />
      <path d="M774 178V610M839 161V593" stroke="#a8a8a8" />
      {SIDE.map((o) => (
        <g key={o}>
          <path d={`M774 ${178 + o}L839 ${161 + o}`} stroke="#a4a4a4" />
          <path d={`M611 ${179 + o}L740 ${145 + o}L774 ${178 + o}V${181 + o}L645 ${213 + o}L611 ${182 + o}Z`} fill="#c5c5c5" />
          <path d={`M611 ${180 + o}L740 ${146 + o}M645 ${212 + o}L774 ${180 + o}`} stroke="#a3a09f" strokeWidth="1.600" />
          <path d={`M611 ${180 + o}L645 ${212 + o}`} stroke="#b0acab" />
          <path d={`M616 ${179 + o}L646 ${207 + o}L771 ${176 + o}L740 ${146 + o}`} stroke="#cda898" strokeWidth=".8" />
          <Nd x={612} y={179 + o} /><Nd x={645} y={210 + o} /><Nd x={774} y={178 + o} />
          <Nd x={740} y={146 + o} s={3} /><Nd x={839} y={161 + o} s={4} /><Nd x={628} y={196 + o} s={3} />
        </g>
      ))}
      <path d="M740 145L805 129L839 161" stroke="#a4a4a4" /><Nd x={805} y={129} /><Nd x={740} y={145} />
      <path d="M625 195H632V620H625Z" fill="#c3c3c3" />
      <path d={major} stroke="#f8f8f8" strokeWidth="1.500" clipPath="url(#bld)" strokeDasharray="6 1" />
      <path d={dots} stroke="#707070" shapeRendering="crispEdges" />
      {/* section marker */}
      <g stroke="#999ba0" strokeDasharray="5 3 1 3"><path d="M734 168L758 162V178M628 193L654 189M628 196V212" /></g>
      <path d="M754 178H762L758 188ZM624 211H632L628 221Z" fill="#999ba0" />
      <rect x="611" y="178" width="33" height="16" fill="#e4e4e4" opacity=".85" />
      <text x="613" y="190" fill="#777" fontSize="11" fontFamily="Liberation Sans, sans-serif">Řez 1</text>
      {/* ground slab outline */}
      <path d="M611 611L740 577L774 610L645 642Z" fill="#c5c5c5" opacity=".8" />
      {/* deformed surface */}
      {bands.slice(0, -1).map((b, i) => {
        const n = bands[i + 1];
        return <path key={i} d={`M${b[0]} ${b[1]}L${n[0]} ${n[1]}L${n[2]} ${n[3]}L${b[2]} ${b[3]}Z`} fill={b[4]} stroke={b[4]} strokeWidth=".6" />;
      })}
      <path d="M611 611L740 577L774 610L645 642Z" fill="#909090" fillOpacity=".32" stroke="#606060" />
      <path d="M628 627L757 593" stroke="#f08080" strokeWidth="1.300" />
      <path d="M632 626Q690 655 757 593Z" fill="#e8a0a0" fillOpacity=".4" />
      <path d="M640 624V629M647 622V630M654 620V631M661 619V632M668 617V631M675 615V630M682 613V630M689 611V629M696 609V628M703 607V622M710 606V618M717 604V613M724 602V609M731 600V604" stroke="#f08080" />
      {/* basement */}
      <path d="M740 628L774 659L839 643" stroke="#20d830" strokeWidth="6" strokeDasharray="3 1" />
      <path d="M740 577L805 561L839 593L774 610Z" fill="#2f2f90" stroke="#555a60" />
      <path d="M774 610V657L741 627L755 615Z" fill="#28288c" />
      <path d="M774 610L839 593V641L774 657Z" fill="#0000a4" stroke="#444a60" />
      <path d="M628 627V674" stroke="#8c8494" strokeWidth="5" />
      <path d="M628 633V670" stroke="#5050b0" strokeDasharray="2 2" />
      <path d="M694 630V644" stroke="#e8e0e8" /><Nd x={694} y={646} c="#704060" />
      {[[612, 611], [645, 642], [740, 577], [805, 561], [774, 609], [839, 592], [839, 641], [774, 657], [628, 626]].map(([x, y]) => (
        <Nd key={`${x}-${y}`} x={x} y={y} c="#f40000" />
      ))}
      <g fontFamily="Open Sans, sans-serif" fontSize="11"><text x="620" y="640" fill="#e87070">0.1</text><text x="677" y="649" fill="#d05050">5.2</text><text x="695" y="659" fill="#9c4070">5.6</text></g>
      <Triad x={628} y={674} z={30} />
      <circle cx="628" cy="702" r="3" fill="#00007c" />
      <Triad x={362} y={628} z={26} />
      <path d="M358 653H366L362 664Z" fill="#00007c" />
      <text x="358" y="676" fontSize="11" fill="#2020a0" fontFamily="Open Sans, sans-serif">Z</text>
    </g>
  </svg>
);

/* orientation cube: each face is cut at the same two fractions */
const cut = [0.26, 0.74];
const face = (o: P, a: P, b: P) =>
  cut.map((t) => `M${o.x + a.x * t} ${o.y + a.y * t}l${b.x} ${b.y}M${o.x + b.x * t} ${o.y + b.y * t}l${a.x} ${a.y}`).join("");
const NavCube = () => (
  <svg width="100" height="110" viewBox="705 360 300 330" className="absolute right-[18px] top-[13px]" role="img" aria-label="Orientace pohledu">
    <g stroke="#7c7878" strokeWidth="4.500" strokeLinejoin="round">
      <path d="M715 412L897 367L995 457L815 500Z" fill="#a2a2a2" />
      <path d="M715 412L815 500V682L715 595Z" fill="#9a9a9a" />
      <path d="M815 500L995 457V635L815 682Z" fill="#c4c4c4" />
      <path fill="none" d={face({ x: 715, y: 412 }, { x: 182, y: -45 }, { x: 100, y: 88 }) + face({ x: 715, y: 412 }, { x: 100, y: 88 }, { x: 0, y: 182 }) + face({ x: 815, y: 500 }, { x: 180, y: -44 }, { x: 0, y: 180 })} />
    </g>
    <g fontFamily="Liberation Sans, sans-serif" fontWeight="700" textAnchor="middle">
      <text transform="matrix(.97 -.24 .6 .6 862 446)" fontSize="38" fill="#34348c">+Z</text>
      <text transform="matrix(.7 .6 0 1 766 570)" fontSize="38" fill="#c83c3c">+X</text>
      <text transform="matrix(.97 -.2 0 1 904 584)" fontSize="38" fill="#3cb44c">-Y</text>
    </g>
  </svg>
);

/* ---------- colour panel ---------- */
const scale = [
  ["5.6", "0.62 %", "bg-[#b90000]"], ["5.1", "0.44 %", "bg-[#ff0000]"], ["4.6", "0.32 %", "bg-[#ffaa00]"],
  ["4.1", "0.27 %", "bg-[#cfcf00]"], ["3.6", "0.24 %", "bg-[#ffff00]"], ["3.1", "0.23 %", "bg-[#00ff00]"],
  ["2.5", "0.22 %", "bg-[#00e68a]"], ["2.0", "0.22 %", "bg-[#00f5fa]"], ["1.5", "0.22 %", "bg-[#0099ff]"],
  ["1.0", "0.22 %", "bg-[#0000ff]"], ["0.5", "97.00 %", "bg-[#0000a5]"],
];
const rangeCls =
  "pointer-events-none absolute inset-0 h-full w-[21px] appearance-none bg-transparent [direction:rtl] [writing-mode:vertical-lr] [&::-webkit-slider-thumb]:pointer-events-auto [&::-webkit-slider-thumb]:h-[10px] [&::-webkit-slider-thumb]:w-[21px] [&::-webkit-slider-thumb]:appearance-none [&::-webkit-slider-thumb]:bg-[#0078d7]";
const ControlPanel = () => (
  <section className="absolute right-44 top-[57px] flex w-[231px] flex-col bg-white shadow-[0_0_8px_rgba(0,0,0,0.4)]">
    <header className="flex h-[31px] items-center border-b border-[#c4c4d4] pl-2 text-[11px] text-[#8c8c8c]">
      Ovládací panel
      <button type="button" aria-label="Zavřít" className="ml-auto mr-px mt-1 h-[19px] w-[19px] bg-[#e1e1e1] text-[10px] leading-4 text-white">x</button>
    </header>
    <div className="border-x border-[#d0d0dc]">
      <div className="h-10 pl-[10px] pt-[5px] leading-[13px]">
        Globální deformace<br />|u| [mm]
      </div>
      <div className="flex h-[343px] bg-[#f7f7f7] pt-[12px]">
        <ul className="ml-[37px] w-[30px] text-right leading-[26px] -mt-[6px]">
          {scale.map((s) => <li key={s[0]}>{s[0]}</li>)}
          <li>0.0</li>
        </ul>
        <ul className="ml-[13px] mt-[7px] w-[41px]">
          {scale.map((s) => <li key={s[0]} className={`h-[26px] border-b-2 border-[#f7f7f7] ${s[2]}`} />)}
        </ul>
        <ul className="mt-[7px] w-[51px] text-right leading-[26px]">
          {scale.map((s) => <li key={s[0]}>{s[1]}</li>)}
        </ul>
        <div className="relative ml-[7px] flex h-[297px] w-[21px] justify-center">
          <span className="w-1 border border-[#d4d6d6] bg-[#e7eaea]" />
          <input type="range" aria-label="Horní mez" defaultValue={100} className={rangeCls} />
          <input type="range" aria-label="Dolní mez" defaultValue={0} className={rangeCls} />
        </div>
      </div>
      <div className="flex h-[34px] items-center justify-end gap-[6px] pr-[6px]">
        <button type="button" aria-label="Nastavení" className="flex h-[21px] w-[25px] items-center justify-center bg-[#cce4f7]"><Ico s={16}>{I.handBox}</Ico></button>
        <button type="button" aria-label="Rozsahy" className="flex h-[21px] w-[25px] items-center justify-center border border-[#0f5a9c] bg-[#cce4f7]"><Ico s={16}>{I.ranges}</Ico></button>
      </div>
      <div className="flex h-[26px] bg-[#f7f7f7]">
        <button type="button" aria-label="Barvy" className="flex w-[37px] items-center justify-center bg-white"><Ico s={15}>{I.legend}</Ico></button>
        {["scales", "filtMem"].map((n) => (
          <button key={n} type="button" aria-label={n} className="mb-[2px] flex w-[39px] items-center justify-center border border-l-0 border-[#c8c8d4] bg-[#ececec]"><Ico s={16}>{I[n]}</Ico></button>
        ))}
        <span className="flex-1 border-t border-[#c8c8d4]" />
      </div>
    </div>
  </section>
);

/* ---------- page ---------- */
const menus = ["Soubor", "Úpravy", "Zobrazit", "Vložit", "Přiřadit", "Výpočet", "Výsledky", "Nástroje", "Možnosti", "Okno", "CAD-BIM", "Nápověda"];
const rows = ["Součet zatížení ve směru X", "Součet podporových sil ve směru X", "Součet zatížení ve směru Y"];
const cell = "border-b border-r border-[#dedede] px-1";

export default function App() {
  return (
    <div className="flex h-screen min-w-0 flex-col overflow-hidden border-x border-y border-[#6a6a6a] bg-[#f7f7f7] font-['Open_Sans','Noto_Sans',sans-serif] text-[11px] text-black">
      <header className="flex h-[30px] shrink-0 items-center bg-white pl-[7px]">
        <svg width="17" height="17" viewBox="0 0 20 20"><path d="M4 6L11 1L17 3L19 9L14 16L8 17L3 12Z" fill="#5b6b7f" /><path d="M7 4L13 15M10 2L16 12M4 8L14 4M5 12L17 7" stroke="#b8c4d0" /><circle cx="5" cy="14" r="5" fill="#e8b830" /><text x="2.500" y="18" fontSize="10" fontWeight="700" fill="#6a4c00">6</text></svg>
        <h1 className="ml-[5px] text-[11px]">Dlubal RFEM | 6.01.0009 | Construction stages analysis.rf6</h1>
        <div className="ml-auto flex items-center gap-[35px] pr-[18px]">
          <button type="button" aria-label="Minimalizovat"><svg width="11" height="11"><path d="M0 5.500H11" stroke="#000" /></svg></button>
          <button type="button" aria-label="Maximalizovat"><svg width="11" height="11" fill="none"><path d="M.5 .5H10.500V10.500H.5Z" stroke="#000" /></svg></button>
          <button type="button" aria-label="Zavřít"><svg width="11" height="11"><path d="M.5 .5L10.500 10.500M10.500 .5L.5 10.500" stroke="#000" /></svg></button>
        </div>
      </header>

      <nav className="flex h-[21px] shrink-0 items-center text-[11px]">
        <svg width="16" height="12" viewBox="0 0 16 12"><rect width="16" height="12" fill="#25306e" /><path d="M0 7H16M1 6L5 3L9 6M5 1V10" stroke="#fff" fill="none" /></svg>
        <ul className="ml-2 flex gap-4">
          {menus.map((m) => <li key={m}><a href="#">{m}</a></li>)}
        </ul>
        <span className="ml-auto">Online License 32 | Hana Karoušová | Dlubal Software s.r.o.</span>
        <div className="ml-2 mr-px flex gap-[2px]">
          {["M1 8H8", "M2 3V1H8V6H7M1 4H6V8H1Z", "M1 1L8 8M8 1L1 8"].map((d) => (
            <button key={d} type="button" aria-label="Okno" className="flex h-[17px] w-4 items-center justify-center border border-[#e2e2e2] bg-white">
              <svg width="9" height="9" fill="none"><path d={d} stroke="#667788" strokeWidth="1.600" /></svg>
            </button>
          ))}
        </div>
      </nav>

      <div role="toolbar" className="flex h-[27px] shrink-0 items-center border-t border-[#e2e2e2] pr-px">
        <Grip />
        <Group w="w-[220px]" t="newModel open dC dBox hand save print v report" />
        <Sep />
        <Group w="w-[75px]" t="undo v redo v" />
        <Sep />
        <Group w="w-[155px]" t="panelL* panelT* panelC* console script doc" />
        <span className="h-full w-px bg-[#d4d4d4]" /><Grip />
        <Group w="w-[129px]" t="selRect selEll selRing selLasso selPM" />
        <span className="ml-[2px] h-full w-px bg-[#d4d4d4]" /><Grip />
        <Group w="w-[52px]" t="tblStar tbl" />
        <div className="ml-[2px] flex shrink-0 items-center gap-px">
          <StageCombo w="w-[270px]" mark="-left-[5px] -right-[25px] -top-[10px] -bottom-[8px]" />
          <Step dir="l" /><Step dir="r" />
        </div>
        <Group w="w-[233px]" t="filtX v eyeBeam xxBeam eyeLoad* xxLoad gridEye v resEye* resXX*" />
        <Sep />
        <Group w="w-[64px]" t="resGear abacus v" />
        <span className="h-full w-px bg-[#d4d4d4]" /><Grip />
        <Group w="w-[52px]" t="magX box" />
        <More className="ml-auto" />
      </div>

      <div role="toolbar" className="flex h-[27px] shrink-0 items-center border-t border-[#e2e2e2] pr-px">
        <Grip />
        <Group w="w-[142px]" t="node v line member v poly v" />
        <Sep />
        <Group w="w-[77px]" t="sup1 sup2 sup3" />
        <Sep />
        <Group w="w-[62px]" t="dimX v dimXX" />
        <Sep />
        <Group w="w-[178px]" t="surf v surf2 v opening v solid v solidWin" />
        <Sep />
        <Group w="w-[180px]" t="load1 load2 load3 load4 loadI v loadS v" />
        <span className="h-full w-px bg-[#d4d4d4]" /><Grip />
        <Group w="w-[25px]" t="filtWin" />
        <Sep />
        <Group w="w-[156px]" t="frame* member2 fan cube reac slice*" />
        <Sep />
        <Group w="w-[157px]" t="d1 d2 d3 d4 d5 sliceStar" />
        <Sep />
        <Group w="w-[38px]" t="paint v" />
        <span className="h-full w-px bg-[#d4d4d4]" /><Grip />
        <Combo w="w-[124px]" text="1 - Globální XYZ" label="Souřadný systém" />
        <Group w="w-[25px]" t="axes" />
        <Sep />
        <Group w="w-[51px]" t="handGrid target" />
        <More className="ml-[3px]" />
        <span className="h-full w-px bg-[#d4d4d4]" /><Grip />
        <Group w="w-[38px]" t="tblGreen v" />
        <More className="ml-auto" />
      </div>

      <main className="flex min-h-0 flex-1 gap-1 pl-px">
        <aside className="flex w-[297px] shrink-0 flex-col">
          <div className="flex h-[21px] items-center bg-[#d9e6f3] pl-[5px]">
            <h2 className="text-[12px] font-semibold text-[#3c3c3c]">Navigátor - Výsledky</h2>
            <DockButtons />
          </div>
          <div className="mt-[2px] flex min-h-0 flex-1 flex-col border-2 border-b border-[#c9c9d8] bg-white">
            <div className="flex h-8 shrink-0 items-start gap-px bg-[#f7f7f7] pl-[2px] pt-[2px]">
              <Combo w="w-[257px]" icon="analysis" text="Statická analýza" label="Analýza" />
              <Step dir="l" dim /><Step dir="r" />
            </div>
            <ul className="min-h-0 flex-1 overflow-hidden">{tree.map((r) => <TreeRow key={r.t + r.sub} r={r} />)}</ul>
            <div className="h-[5px] shrink-0 bg-[#f4f4f4]" />
            <ul className="h-[236px] shrink-0">{display.map((r) => <TreeRow key={r.t} r={r} />)}</ul>
            <div className="flex h-[26px] shrink-0 bg-[#f7f7f7]">
              {["navData", "navEye", "cam"].map((n) => (
                <button key={n} type="button" aria-label={n} className="mb-[2px] flex w-[38px] items-center justify-center border-b border-r border-t border-[#c8c8d4] bg-[#ececec]"><Ico s={16}>{I[n]}</Ico></button>
              ))}
              <button type="button" aria-label="wedge" className="flex w-[39px] items-center justify-center bg-white"><Ico s={16}>{I.wedge}</Ico></button>
              <span className="flex-1 border-l border-t border-[#c8c8d4]" />
            </div>
          </div>
        </aside>

        <div className="flex min-w-0 flex-1 flex-col">
          <section className="relative min-h-0 flex-1 overflow-hidden bg-white">
            <Scene />
            <div className="absolute left-[5px] top-1 leading-[17px]">
              Režim viditelnosti<br />FV1 - Začátek<br />Statická analýza<br />Posuny |u| [mm]
            </div>
            <p className="absolute bottom-[1px] left-[5px] leading-4">max |u| : 5.6 | min |u| : 0.0 mm</p>
            <NavCube />
            <ControlPanel />
          </section>

          <section className="mt-1 flex h-[195px] shrink-0 flex-col">
            <div className="flex h-[21px] shrink-0 items-center bg-[#d9e6f3] pl-[6px]">
              <h2 className="text-[12px] font-semibold text-[#3c3c3c]">Shrnutí</h2>
              <DockButtons />
            </div>
            <ul className="flex h-5 shrink-0 items-center gap-4 border-b border-[#e2e2e2] pl-2 pt-[3px]">
              {["Přejít na", "Úpravy", "Výběr", "Zobrazit", "Nastavení"].map((m) => <li key={m}><a href="#">{m}</a></li>)}
            </ul>
            <div role="toolbar" className="flex h-7 shrink-0 items-center pl-[2px]">
              <div className="flex gap-px">
                <Combo w="w-[152px]" icon="analysis" text="Statická analýza" label="Analýza" />
                <Step dir="l" /><Step dir="r" />
              </div>
              <Sep />
              <span className="mr-[5px] h-full w-px bg-[#d4d4d4]" />
              <div className="flex gap-px">
                <Combo w="w-[248px]" icon="analysis" text="Přehled" label="Tabulka" />
                <Step dir="l" dim /><Step dir="r" />
              </div>
              <Sep />
              <div className="flex gap-px">
                <StageCombo w="w-[249px]" mark="-left-[9px] -right-[5px] -top-[5px] -bottom-[4px]" />
                <Step dir="l" /><Step dir="r" />
              </div>
              <Sep />
              <Group w="w-[51px]" t="syncA* syncB*" />
              <Sep />
              <Group w="w-[51px]" t="resEye* resXX*" />
              <Sep />
              <Group w="w-[77px]" t="tGrid tNode tNodeY*" />
              <Sep />
              <Group w="w-[25px]" t="bars" />
              <Sep />
              <Group w="w-[25px]" t="excel" />
              <span className="mx-[2px] h-full w-px bg-[#d4d4d4]" />
              <Group w="w-[25px]" t="filtWin" />
              <More className="ml-auto" />
            </div>
            <div className="flex min-h-0 flex-1 border border-[#c8c8d4]">
              <div className="min-w-0 flex-1 overflow-hidden">
                <table className="w-full table-fixed border-separate border-spacing-0">
                  <colgroup><col className="w-[60px]" /><col className="w-[350px]" /><col className="w-20" /><col className="w-20" /><col /></colgroup>
                  <thead>
                    <tr className="h-[9px] bg-[#e1e1e1]">{[0, 1, 2, 3, 4].map((i) => <td key={i} className="border-r border-white p-0" />)}</tr>
                    <tr className="h-[33px] align-bottom">
                      <td className="border-r border-white bg-[#e1e1e1]" />
                      {["Popis", "Hodnota", "Jednotka", "Poznámky"].map((h) => <th key={h} className="border-b border-r border-t border-[#d2d2d2] bg-[#efefef] font-normal leading-4">{h}</th>)}
                    </tr>
                  </thead>
                  <tbody>
                    <tr className="h-4"><td colSpan={5} className="border-b border-[#dedede] bg-[#ebebeb] px-1 leading-[15px]">Souhrn zatížení a souhrn podporových sil</td></tr>
                    {rows.map((r, i) => (
                      <tr key={r} className={`h-4 leading-[15px] ${i % 2 ? "bg-[#fffae6]" : "bg-[#fffdf3]"}`}>
                        <td className="border-r border-white bg-[#e1e1e1]" />
                        <td className={cell}>{r}</td><td className={`${cell} text-right`}>0.00</td><td className={cell}>kN</td><td className={cell} />
                      </tr>
                    ))}
                  </tbody>
                </table>
              </div>
              <div className="flex w-[17px] shrink-0 flex-col items-center bg-[#f0f0f0] py-[6px]">
                <Chevron className="rotate-180" />
                <span className="mt-[5px] h-[18px] w-[14px] bg-[#cdcdcd]" />
                <Chevron className="mt-auto" />
              </div>
            </div>
            <div className="flex h-[22px] shrink-0 items-start">
              <div className="flex h-[22px] items-center gap-[9px] pl-1">
                {["M1 0V7M7 0V7L3 3.500Z", "M6 0V7L1 3.500Z"].map((d) => <button key={d} type="button" aria-label="Zpět" className="w-2"><svg width="8" height="7"><path d={d} fill="#999" stroke="#999" /></svg></button>)}
                <span className="w-[42px] text-center">1 z 1</span>
                {["M1 0V7L6 3.500Z", "M1 0V7L5 3.500ZM7 0V7"].map((d) => <button key={d} type="button" aria-label="Vpřed" className="w-2"><svg width="8" height="7"><path d={d} fill="#999" stroke="#999" /></svg></button>)}
              </div>
              <button type="button" className="ml-1 h-[22px] border border-t-0 border-[#c8c8d4] bg-white px-3">Shrnutí</button>
            </div>
          </section>
        </div>
      </main>

      <footer className="flex h-[23px] shrink-0 items-center">
        <div className="flex flex-1 items-center justify-end gap-[2px] pr-1">
          {["ÚCHOP", "RASTR", "LRASTR", "OUCHOP"].map((b) => (
            <button key={b} type="button" className="h-[19px] border-l border-t border-[#b8b8b8] bg-[#ececec] px-[3px]">{b}</button>
          ))}
        </div>
        <span className="h-[19px] w-[102px] whitespace-nowrap border-r border-[#d4d4d4] leading-[19px]">Režim viditelnosti</span>
        <span className="h-[19px] w-[105px] border-r border-[#d4d4d4]" />
        <span className="h-[19px] w-[156px] border-r border-[#d4d4d4] pl-1 leading-[19px]">SS: Globální XYZ</span>
        <span className="h-[19px] w-[66px] border-r border-[#d4d4d4] pl-1 leading-[19px]">Rovina: XY</span>
        <span className="h-[19px] w-[76px] border-r border-[#d4d4d4]" />
        <span className="h-[19px] w-[76px] border-r border-[#d4d4d4]" />
        <span className="h-[19px] w-[76px] border-r border-[#d4d4d4]" />
        <svg width="18" height="19"><path d="M14 9h2M10 13h6M6 17h10" stroke="#b0b0b0" strokeWidth="2" strokeDasharray="2 2" /></svg>
      </footer>
    </div>
  );
}
